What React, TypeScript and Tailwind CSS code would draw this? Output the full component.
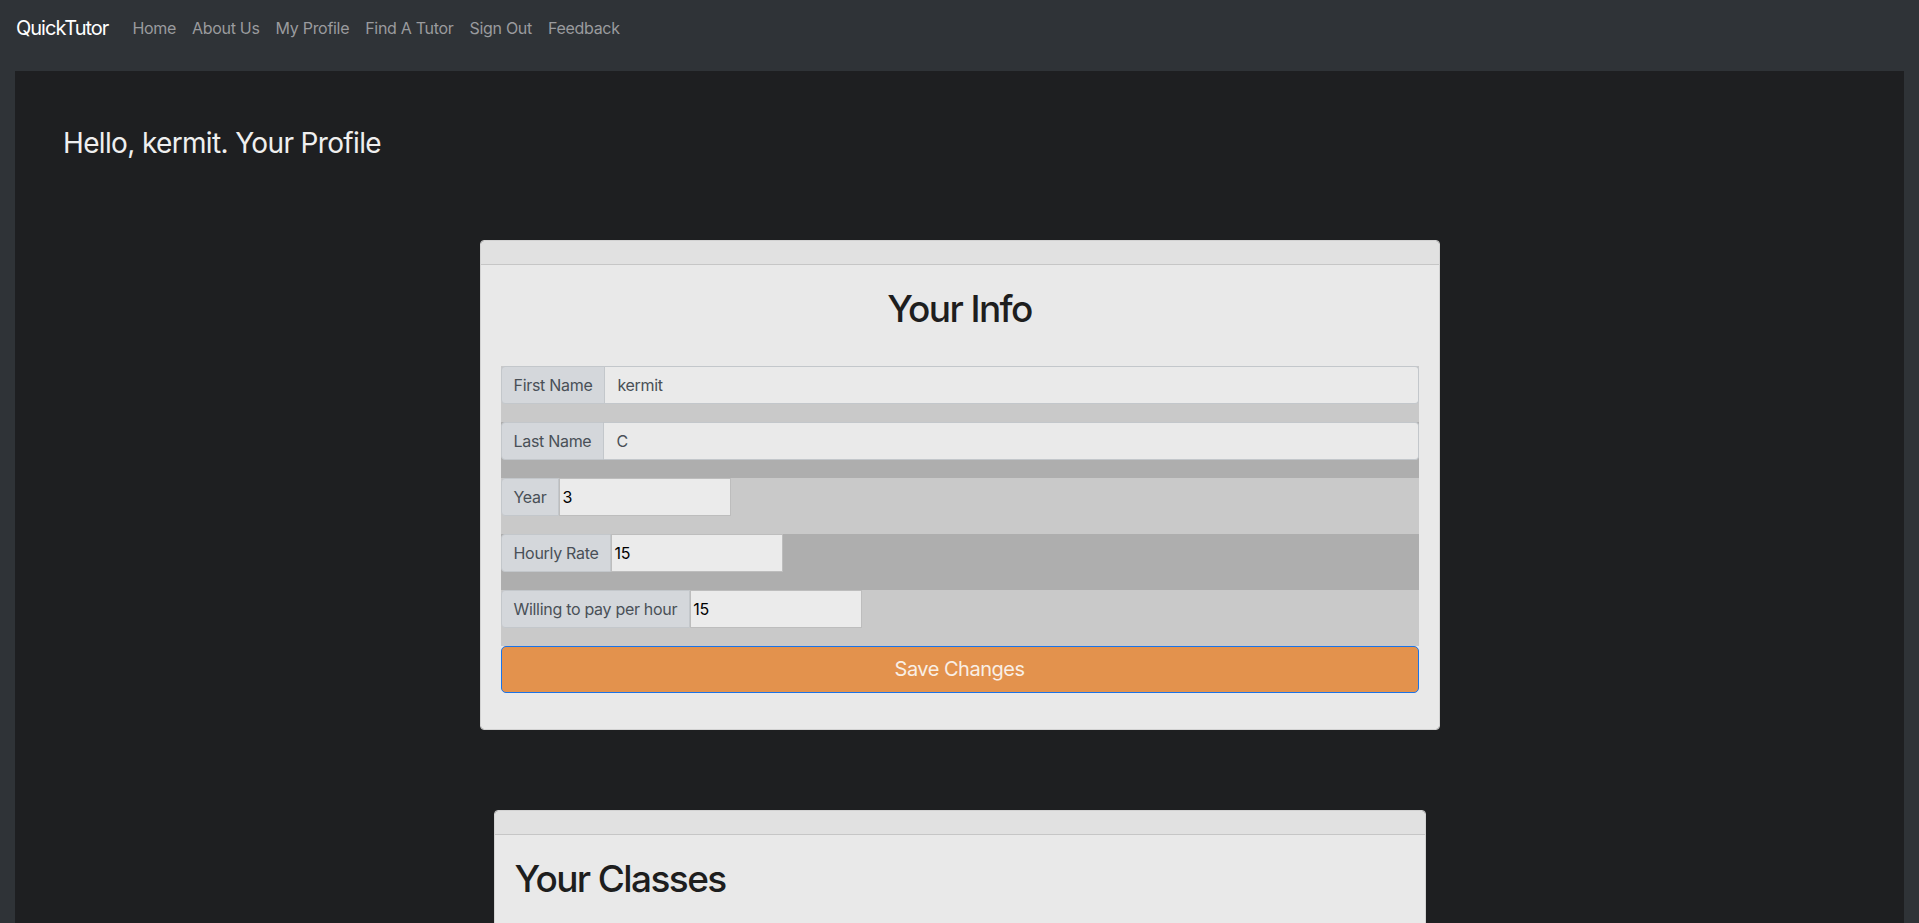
const links = ['Home', 'About Us', 'My Profile', 'Find A Tutor', 'Sign Out', 'Feedback'];

interface Field {
  label: string;
  value: string;
  wide: boolean;
}

const fields: Field[] = [
  { label: 'First Name', value: 'kermit', wide: true },
  { label: 'Last Name', value: 'C', wide: true },
  { label: 'Year', value: '3', wide: false },
  { label: 'Hourly Rate', value: '15', wide: false },
  { label: 'Willing to pay per hour', value: '15', wide: false },
];

const FieldRow = ({ field, odd }: { field: Field; odd: boolean }) => (
  <div className={`pb-[18px] ${odd ? 'bg-[#c9c9c9]' : 'bg-[#aeaeae]'}`}>
    <div className="flex h-[38px]">
      <span className="flex items-center px-3 bg-[#d4d7db] border border-[#c3c7cb] rounded-l-[4px] text-[#495057] text-base tracking-[-0.3px] whitespace-nowrap">
        {field.label}
      </span>
      {field.wide ? (
        <input
          readOnly
          value={field.value}
          className="flex-1 min-w-0 px-3 bg-[#eaeaea] border border-l-0 border-[#c3c7cb] rounded-r-[4px] text-[#495057] text-base tracking-[-0.3px] outline-none"
        />
      ) : (
        <input
          readOnly
          value={field.value}
          className="w-[172px] px-[2px] bg-[#ebebeb] border border-[#bdbdbd] text-black text-base tracking-[-0.3px] outline-none"
        />
      )}
    </div>
  </div>
);

const App = () => {
  return (
    <div className="min-h-screen bg-[#2f3337] font-['Inter',sans-serif] pb-[15px]">
      <nav className="h-14 px-4 flex items-center">
        <a className="text-xl text-white mr-4 tracking-[-1px]">QuickTutor</a>
        <ul className="flex">
          {links.map((l) => (
            <li key={l}>
              <a className="px-2 text-base text-[#9a9b9e] tracking-[-0.3px]">{l}</a>
            </li>
          ))}
        </ul>
      </nav>

      <main className="mx-[15px] mt-[15px] bg-[#1e1f21] px-12 pt-[56px] pb-24">
        <h3 className="text-[28px] leading-[1.2] text-[#efefef] tracking-[-0.65px]">Hello, kermit. Your Profile</h3>

        <section className="w-[960px] mx-auto mt-[79px] border border-[#d2d2d2] rounded-[4px] overflow-hidden">
          <div className="h-6 bg-[#e1e1e1] border-b border-[#c6c6c6]" />
          <div className="bg-[#e9e9e9] px-5 pt-5 pb-9">
            <h1 className="text-[37px] leading-[48px] text-center text-[#1e1e1e] font-medium tracking-[-1.6px] mb-[33px]">Your Info</h1>
            <form>
              {fields.map((f, i) => (
                <FieldRow key={f.label} field={f} odd={i % 2 === 0} />
              ))}
              <button
                type="button"
                className="w-full h-[47px] bg-[#e3924d] border border-[#1a73e8] rounded-[5px] text-xl text-[#f9efe5] tracking-[-0.5px]"
              >
                Save Changes
              </button>
            </form>
          </div>
        </section>

        <section className="w-[932px] mx-auto mt-[80px] border border-[#d2d2d2] rounded-[4px] overflow-hidden">
          <div className="h-6 bg-[#e1e1e1] border-b border-[#c6c6c6]" />
          <div className="bg-[#e9e9e9] px-5 pt-5 pb-40">
            <h1 className="text-[37px] leading-[48px] text-[#1e1e1e] font-medium tracking-[-1.6px]">Your Classes</h1>
          </div>
        </section>
      </main>
    </div>
  );
};

export default App;
